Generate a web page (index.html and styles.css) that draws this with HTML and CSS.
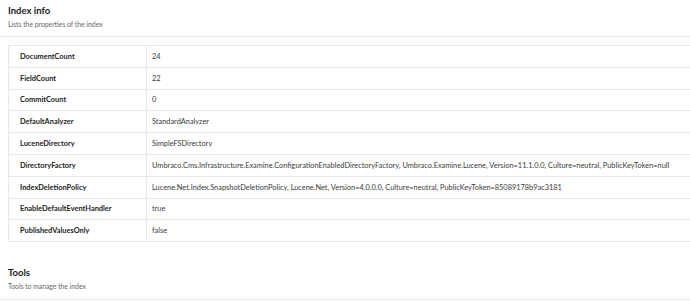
FILE: index.html
```html
<!DOCTYPE html>
<html>
<head>
<meta charset="utf-8">
<link rel="stylesheet" href="styles.css">
</head>
<body>
<div class="page">
  <div class="section-head">
    <div class="title">Index info</div>
    <div class="subtitle">Lists the properties of the index</div>
  </div>
  <table class="props">
    <tr><td class="key">DocumentCount</td><td class="val">24</td></tr>
    <tr><td class="key">FieldCount</td><td class="val">22</td></tr>
    <tr><td class="key">CommitCount</td><td class="val">0</td></tr>
    <tr><td class="key">DefaultAnalyzer</td><td class="val">StandardAnalyzer</td></tr>
    <tr><td class="key">LuceneDirectory</td><td class="val">SimpleFSDirectory</td></tr>
    <tr><td class="key">DirectoryFactory</td><td class="val">Umbraco.Cms.Infrastructure.Examine.ConfigurationEnabledDirectoryFactory, Umbraco.Examine.Lucene, Version=11.1.0.0, Culture=neutral, PublicKeyToken=null</td></tr>
    <tr><td class="key">IndexDeletionPolicy</td><td class="val">Lucene.Net.Index.SnapshotDeletionPolicy, Lucene.Net, Version=4.0.0.0, Culture=neutral, PublicKeyToken=85089178b9ac3181</td></tr>
    <tr><td class="key">EnableDefaultEventHandler</td><td class="val">true</td></tr>
    <tr><td class="key">PublishedValuesOnly</td><td class="val">false</td></tr>
  </table>
  <div class="section-head tools">
    <div class="title">Tools</div>
    <div class="subtitle">Tools to manage the index</div>
  </div>
</div>
</body>
</html>
```
FILE: styles.css
```css
html, body {
  margin: 0;
  padding: 0;
  background: #ffffff;
  overflow: hidden;
}
body {
  font-family: Lato, "Open Sans", sans-serif;
  color: #1b1b1d;
}
.page {
  width: 690px;
  overflow: hidden;
}
.section-head {
  padding: 5px 8px 0 8px;
  height: 31px;
  border-bottom: 1px solid #e9e9eb;
}
.title {
  font-size: 9.5px;
  font-weight: 700;
  line-height: 11px;
  color: #1b1b1d;
}
.subtitle {
  font-size: 6.8px;
  line-height: 8px;
  margin-top: 4px;
  color: #68676b;
}
.props {
  margin: 8px 0 0 8px;
  width: 700px;
  border-collapse: collapse;
  border: 1px solid #e9e9eb;
  font-size: 7.4px;
}
.props td {
  border-top: 1px solid #e9e9eb;
  height: 20.8px;
  padding: 0;
  vertical-align: middle;
  white-space: nowrap;
}
.props .key {
  width: 126px;
  padding-left: 11px;
  font-weight: 700;
  color: #1b1b1d;
  border-right: 1px solid #e9e9eb;
}
.props .val {
  padding-left: 5px;
  color: #3a3a3c;
}
.tools {
  margin-top: 20px;
  height: 32px;
}
```
